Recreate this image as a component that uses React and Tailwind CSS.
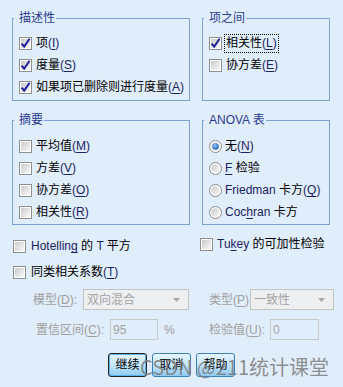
import React from "react";

const latin = "text-[#1b2262]";

function Mn({ k, off }) {
  return (
    <span className={off ? "" : latin}>
      (<span className="underline underline-offset-[2px]">{k}</span>)
    </span>
  );
}

function Check({ checked }) {
  return (
    <svg width="13" height="13" viewBox="0 0 13 13" className="shrink-0">
      <defs>
        <linearGradient id="cbg" x1="0" y1="0" x2="1" y2="1">
          <stop offset="0" stopColor="#cbcbcb" />
          <stop offset="1" stopColor="#f8f8f8" />
        </linearGradient>
      </defs>
      <rect x="0.5" y="0.5" width="12" height="12" fill="#fff" stroke="#8e8f8f" />
      <rect x="2" y="2" width="9" height="9" fill="url(#cbg)" />
      {checked && (
        <path d="M2.6 6.6 L5.2 9.6 L10.6 1.8" fill="none" stroke="#1e1e98" strokeWidth="2" />
      )}
    </svg>
  );
}

function Radio({ checked }) {
  return (
    <svg width="13" height="13" viewBox="0 0 13 13" className="shrink-0">
      <defs>
        <linearGradient id="rbg" x1="0" y1="0" x2="1" y2="1">
          <stop offset="0" stopColor="#c9c9c9" />
          <stop offset="1" stopColor="#f9f9f9" />
        </linearGradient>
        <radialGradient id="rdot" cx="0.4" cy="0.35" r="0.7">
          <stop offset="0" stopColor="#8fc4f5" />
          <stop offset="1" stopColor="#1c5bb4" />
        </radialGradient>
      </defs>
      <circle cx="6.5" cy="6.5" r="6" fill="#fff" stroke="#8a8a8a" />
      <circle cx="6.5" cy="6.5" r="4.3" fill="url(#rbg)" />
      {checked && <circle cx="6.5" cy="6.5" r="3.2" fill="url(#rdot)" />}
    </svg>
  );
}

function CheckRow({ checked, focus, children }) {
  return (
    <div className="h-[22px] flex items-center">
      <Check checked={checked} />
      <span
        className={
          "ml-[2px] h-[19px] px-[1px] flex items-center whitespace-nowrap border " +
          (focus ? "border-dotted border-black" : "border-transparent")
        }
      >
        {children}
      </span>
    </div>
  );
}

function RadioRow({ checked, children }) {
  return (
    <div className="h-[22px] flex items-center">
      <Radio checked={checked} />
      <span className="ml-[3px] whitespace-nowrap">{children}</span>
    </div>
  );
}

function Group({ title, className, pt, children }) {
  return (
    <fieldset className={"border border-[#7ba3d4] m-0 p-0 min-w-0 " + className}>
      <legend className="ml-[1px] pl-[5px] pr-[1px] leading-[14px] text-[#2c3a8f]">{title}</legend>
      <div className={"pl-[6px] " + pt}>{children}</div>
    </fieldset>
  );
}

function Select({ value, w }) {
  return (
    <div className={"shrink-0 h-[21px] border border-[#c4c4c4] bg-[#eeeff1] flex items-center justify-between pl-[3px] pr-[8px] text-[#a4a4a4] " + w}>
      <span className="whitespace-nowrap">{value}</span>
      <svg width="7" height="4" viewBox="0 0 7 4">
        <path d="M0 0 L7 0 L3.5 4 Z" fill="#a9a9a9" />
      </svg>
    </div>
  );
}

function Field({ value, w }) {
  return (
    <div className={"shrink-0 h-[21px] border border-[#c9c9c9] flex items-center pl-[2px] text-[#a4a4a4] " + w}>
      {value}
    </div>
  );
}

function Btn({ def, children }) {
  return (
    <button
      className={
        "w-[39px] h-[24px] rounded-[3px] border bg-linear-to-b from-[#e6f5fd] via-[#c3e5fa] to-[#8ecaf1] text-black text-[12px] leading-none " +
        (def ? "border-[#262626] shadow-[inset_0_0_0_1px_#5db1ea]" : "border-[#3c80b8]")
      }
    >
      {children}
    </button>
  );
}

export default function App() {
  const grey = "shrink-0 whitespace-nowrap text-[#a0a0a0]";
  return (
    <div className="relative w-[343px] h-[387px] overflow-hidden bg-[#e0edfa] text-black text-[12px] leading-[14px] font-['Liberation_Sans','Noto_Sans_CJK_SC',sans-serif]">
      <div className="flex gap-[12px] pl-[12px] pt-[11px]">
        <Group title="描述性" className="w-[178px] h-[90px]" pt="pt-[7px]">
          <CheckRow checked>项<Mn k="I" /></CheckRow>
          <CheckRow checked>度量<Mn k="S" /></CheckRow>
          <CheckRow checked>如果项已删除则进行度量<Mn k="A" /></CheckRow>
        </Group>
        <Group title="项之间" className="w-[128px] h-[90px]" pt="pt-[7px]">
          <CheckRow checked focus>相关性<Mn k="L" /></CheckRow>
          <CheckRow>协方差<Mn k="E" /></CheckRow>
        </Group>
      </div>

      <div className="flex gap-[12px] pl-[12px] mt-[12px]">
        <Group title="摘要" className="w-[178px] h-[112px]" pt="pt-[8px]">
          <CheckRow>平均值<Mn k="M" /></CheckRow>
          <CheckRow>方差<Mn k="V" /></CheckRow>
          <CheckRow>协方差<Mn k="O" /></CheckRow>
          <CheckRow>相关性<Mn k="R" /></CheckRow>
        </Group>
        <Group title="ANOVA 表" className="w-[128px] h-[112px]" pt="pt-[8px]">
          <RadioRow checked>无<Mn k="N" /></RadioRow>
          <RadioRow><span className={latin}><span className="underline underline-offset-[2px]">F</span></span> 检验</RadioRow>
          <RadioRow><span className={latin}>Friedman</span> 卡方<Mn k="Q" /></RadioRow>
          <RadioRow><span className={latin}>Coc<span className="underline underline-offset-[2px]">h</span>ran</span> 卡方</RadioRow>
        </Group>
      </div>

      <div className="grid grid-cols-[200px_1fr] mt-[10px]">
        <div className="h-[22px] pl-[13px] flex items-center gap-[5px] whitespace-nowrap">
          <Check />
          <span><span className={latin}>Hotellin<span className="underline underline-offset-[2px]">g</span></span> 的 <span className={latin}>T</span> 平方</span>
        </div>
        <div className="h-[22px] flex items-center gap-[4px] -mt-[2px] whitespace-nowrap">
          <Check />
          <span><span className={latin}>Tu<span className="underline underline-offset-[2px]">k</span>ey</span> 的可加性检验</span>
        </div>
        <div className="h-[22px] pl-[13px] flex items-center gap-[5px] mt-[4px] whitespace-nowrap">
          <Check />
          <span>同类相关系数<Mn k="T" /></span>
        </div>
        <div />
      </div>

      <div className="grid grid-cols-[200px_1fr] mt-[6px] h-[21px]">
        <div className="pl-[33px] flex items-center">
          <span className={"w-[50px] " + grey}>模型(<span className="underline underline-offset-[2px]">D</span>):</span>
          <Select value="双向混合" w="w-[106px]" />
        </div>
        <div className="pl-[9px] flex items-center">
          <span className={"w-[41px] " + grey}>类型(<span className="underline underline-offset-[2px]">P</span>):</span>
          <Select value="一致性" w="w-[84px]" />
        </div>
      </div>

      <div className="grid grid-cols-[200px_1fr] mt-[9px] h-[21px]">
        <div className="pl-[36px] flex items-center">
          <span className={"w-[74px] " + grey}>置信区间(<span className="underline underline-offset-[2px]">C</span>):</span>
          <Field value="95" w="w-[48px]" />
          <span className={"ml-[6px] " + grey}>%</span>
        </div>
        <div className="pl-[9px] flex items-center">
          <span className={"w-[61px] " + grey}>检验值(<span className="underline underline-offset-[2px]">U</span>):</span>
          <Field value="0" w="w-[49px]" />
        </div>
      </div>

      <div className="flex justify-center gap-[5px] mt-[13px]">
        <Btn def>继续</Btn>
        <Btn>取消</Btn>
        <Btn>帮助</Btn>
      </div>

      <div className="absolute left-[140px] top-[355px] text-[20px] leading-[24px] text-[#7c7c7c]/85 whitespace-nowrap pointer-events-none font-['Noto_Sans_CJK_SC',sans-serif]">
        CSDN @211统计课堂
      </div>
    </div>
  );
}
